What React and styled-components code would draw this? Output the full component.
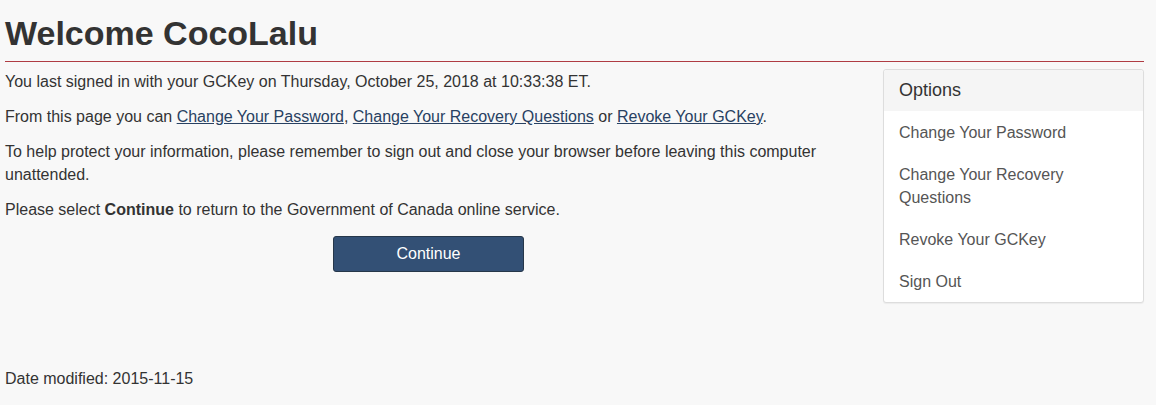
import React from 'react'
import styled, { createGlobalStyle } from 'styled-components'

const GlobalStyle = createGlobalStyle`
	body {
		margin: 0;
		background: #f8f8f8;
		font-family: "Liberation Sans", Arial, sans-serif;
		font-size: 16px;
		line-height: 23px;
		color: #333;
	}
`

const Page = styled.div`
	padding: 0 12px 0 5px;
`

const Title = styled.h1`
	margin: 14px 0 0;
	padding-bottom: 9px;
	font-size: 34px;
	line-height: 38px;
	font-weight: bold;
	color: #333;
	border-bottom: 1px solid #af3c43;
`

const Row = styled.div`
	display: flex;
	align-items: flex-start;
	gap: 31px;
	margin-top: 7px;
`

const Main = styled.div`
	flex: 0 0 847px;
	padding-top: 1px;
`

const Para = styled.p`
	margin: 0 0 12px;
`

const Link = styled.a`
	color: #284162;
	text-decoration: underline;
`

const ButtonRow = styled.div`
	display: flex;
	justify-content: center;
	margin-top: 15px;
`

const Button = styled.button`
	width: 191px;
	height: 36px;
	background: #335075;
	border: 1px solid #26374a;
	border-radius: 3px;
	color: #fff;
	font-family: inherit;
	font-size: 16px;
`

const Panel = styled.div`
	flex: 0 0 261px;
	box-sizing: border-box;
	background: #fff;
	border: 1px solid #ddd;
	border-radius: 3px;
	box-shadow: 0 1px 1px rgba(0, 0, 0, 0.05);
`

const PanelHeading = styled.div`
	height: 41px;
	box-sizing: border-box;
	padding: 10px 15px 0;
	background: #f5f5f5;
	font-size: 18px;
	line-height: 21px;
	color: #333;
	border-radius: 3px 3px 0 0;
`

const Item = styled.div`
	padding: 10px 15px 9px;
	color: #555;
`

const Footer = styled.div`
	margin-top: 64px;
`

const options = [
	'Change Your Password',
	'Change Your Recovery Questions',
	'Revoke Your GCKey',
	'Sign Out'
]

const App = () => (
	<Page>
		<GlobalStyle />
		<Title>Welcome CocoLalu</Title>
		<Row>
			<Main>
				<Para>You last signed in with your GCKey on Thursday, October 25, 2018 at 10:33:38 ET.</Para>
				<Para>
					From this page you can <Link href="#">Change Your Password</Link>,{' '}
					<Link href="#">Change Your Recovery Questions</Link> or <Link href="#">Revoke Your GCKey</Link>.
				</Para>
				<Para>
					To help protect your information, please remember to sign out and close your browser before leaving this
					computer unattended.
				</Para>
				<Para>
					Please select <strong>Continue</strong> to return to the Government of Canada online service.
				</Para>
				<ButtonRow>
					<Button>Continue</Button>
				</ButtonRow>
			</Main>
			<Panel>
				<PanelHeading>Options</PanelHeading>
				{options.map(o => (
					<Item key={o}>{o}</Item>
				))}
			</Panel>
		</Row>
		<Footer>Date modified: 2015-11-15</Footer>
	</Page>
)

export default App
